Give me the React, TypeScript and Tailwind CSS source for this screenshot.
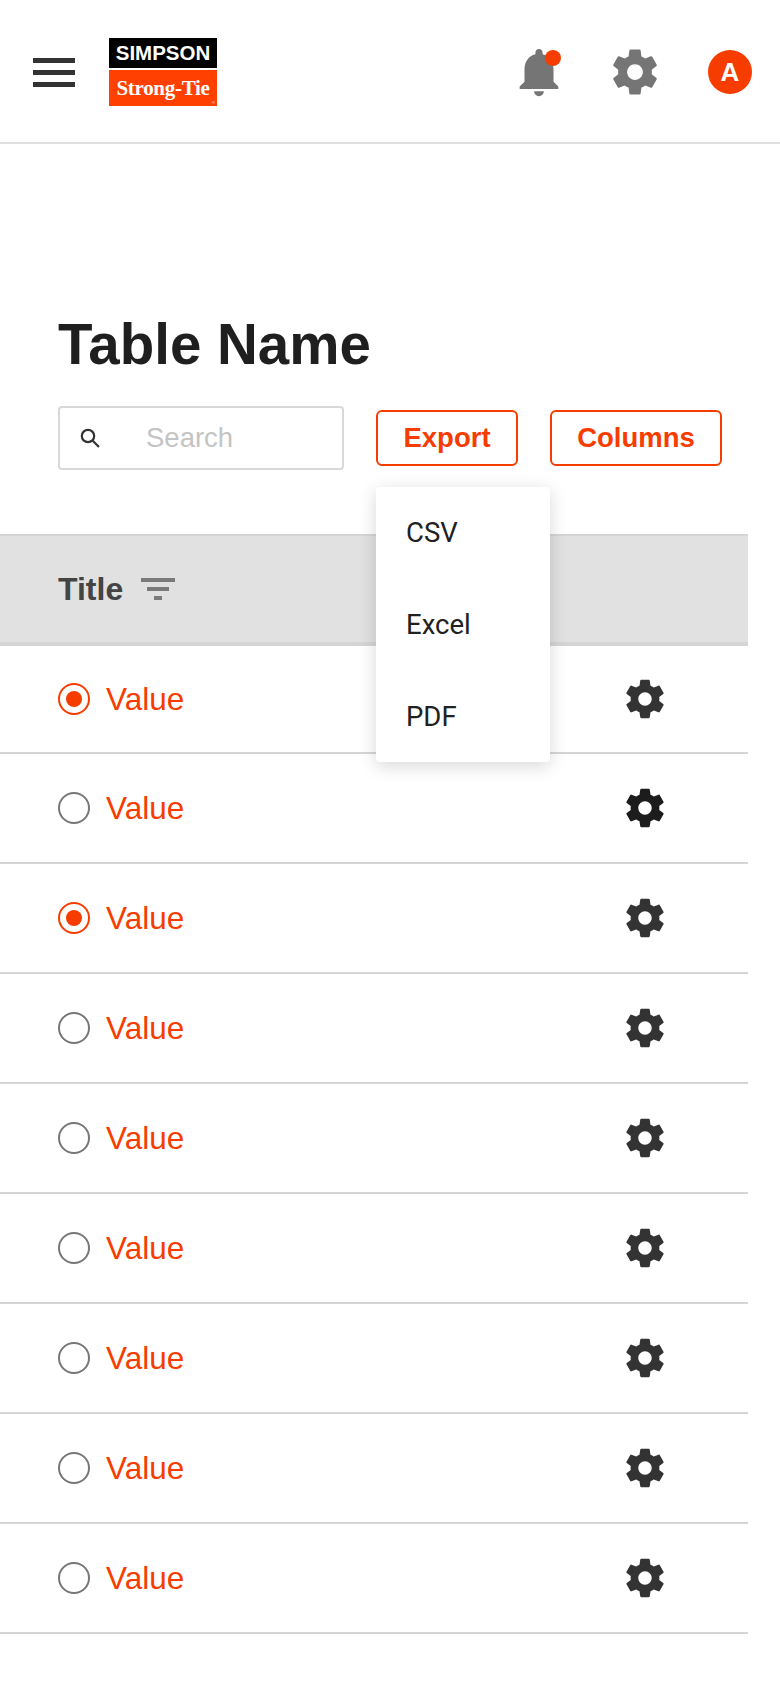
const GEAR =
  'M19.43 12.98c.04-.32.07-.64.07-.98s-.03-.66-.07-.98l2.11-1.65c.19-.15.24-.42.12-.64l-2-3.46c-.12-.22-.39-.3-.61-.22l-2.49 1c-.52-.4-1.08-.73-1.69-.98l-.38-2.65C14.46 2.18 14.25 2 14 2h-4c-.25 0-.46.18-.49.42l-.38 2.65c-.61.25-1.17.59-1.69.98l-2.49-1c-.23-.09-.49 0-.61.22l-2 3.46c-.13.22-.07.49.12.64l2.11 1.65c-.04.32-.07.65-.07.98s.03.66.07.98l-2.11 1.65c-.19.15-.24.42-.12.64l2 3.46c.12.22.39.3.61.22l2.49-1c.52.4 1.08.73 1.69.98l.38 2.65c.03.24.24.42.49.42h4c.25 0 .46-.18.49-.42l.38-2.65c.61-.25 1.17-.59 1.69-.98l2.49 1c.23.09.49 0 .61-.22l2-3.46c.12-.22.07-.49-.12-.64l-2.11-1.65zM12 15.5c-1.93 0-3.5-1.57-3.5-3.5s1.57-3.5 3.5-3.5 3.5 1.57 3.5 3.5-1.57 3.5-3.5 3.5z';

function Gear({ className }: { className: string }) {
  return (
    <svg viewBox="0 0 24 24" fill="currentColor" className={className}>
      <path d={GEAR} />
    </svg>
  );
}

function Logo() {
  return (
    <div className="ml-[34px] flex w-[108px] flex-col gap-[2px]">
      <div className="flex h-[30px] items-center justify-center bg-black font-['Liberation_Sans',sans-serif] text-[20.5px] leading-none font-bold text-white">
        SIMPSON
      </div>
      <div className="relative flex h-[36px] items-center justify-center bg-[#ff4000] font-['Liberation_Serif',serif] text-[21px] leading-none font-bold tracking-[-0.3px] text-white">
        Strong-Tie
        <span className="absolute right-[2px] bottom-[1px] text-[5px] leading-none font-normal">®</span>
      </div>
    </div>
  );
}

function Header() {
  return (
    <header className="flex h-[144px] items-center border-b-2 border-[#e0e0e0] pt-[2px] pr-[28px] pl-[33px]">
      <div className="flex w-[42px] flex-col gap-[7px]">
        <div className="h-[5px] bg-[#333]" />
        <div className="h-[5px] bg-[#333]" />
        <div className="h-[5px] bg-[#333]" />
      </div>

      <Logo />

      <div className="ml-auto flex items-center">
        <div className="relative h-[58px] w-[58px]">
          <svg viewBox="0 0 24 24" fill="#757575" className="h-[58px] w-[58px]">
            <path d="M12 22c1.1 0 2-.9 2-2h-4c0 1.1.89 2 2 2zm6-6v-5c0-3.07-1.64-5.64-4.5-6.32V4c0-.83-.67-1.5-1.5-1.5s-1.5.67-1.5 1.5v.68C7.63 5.36 6 7.92 6 11v5l-2 2v1h16v-1l-2-2z" />
          </svg>
          <span className="absolute top-[7px] left-[35px] h-[16px] w-[16px] rounded-full bg-[#f73c00]" />
        </div>
        <Gear className="ml-[40px] h-[54px] w-[54px] text-[#757575]" />
        <div className="ml-[46px] flex h-[44px] w-[44px] items-center justify-center rounded-full bg-[#f73c00] font-['Liberation_Sans',sans-serif] text-[26px] font-bold text-white">
          A
        </div>
      </div>
    </header>
  );
}

function Toolbar() {
  const buttonClass =
    "flex h-[56px] items-center justify-center rounded-[6px] border-2 border-[#f73c00] bg-white text-[27.5px] font-bold text-[#f73c00]";

  return (
    <div className="mt-[29px] flex items-center gap-[32px] pl-[58px]">
      <div className="flex h-[64px] w-[286px] items-center rounded-[4px] border-2 border-[#d8d8d8] pl-[18px]">
        <svg viewBox="0 0 24 24" fill="none" stroke="#333" strokeWidth="2.2" className="h-[24px] w-[24px] shrink-0">
          <circle cx="10" cy="10" r="6.2" />
          <path d="M14.5 14.5 21 21" />
        </svg>
        <input
          placeholder="Search"
          className="ml-[44px] w-[180px] bg-transparent text-[27.5px] outline-none placeholder:text-[#c4c4c4]"
        />
      </div>

      <div className="relative">
        <button className={`${buttonClass} w-[142px]`}>Export</button>
        <div className="absolute top-[77px] left-0 z-10 w-[174px] rounded-[4px] bg-white font-['Roboto',sans-serif] text-[27.5px] text-[#212121] shadow-[0_4px_18px_rgba(0,0,0,0.16)]">
          {['CSV', 'Excel', 'PDF'].map((item) => (
            <div key={item} className="flex h-[91.67px] items-center pl-[30px]">
              {item}
            </div>
          ))}
        </div>
      </div>

      <button className={`${buttonClass} w-[172px]`}>Columns</button>
    </div>
  );
}

function Row({ index }: { index: number }) {
  const selected = index === 0 || index === 2;

  return (
    <div
      className={`flex items-center justify-between border-b-2 border-[#d5d5d5] pr-[80px] pl-[58px] ${
        index === 0 ? 'h-[108px]' : 'h-[110px]'
      }`}
    >
      <div className="flex items-center gap-[16px]">
        {selected ? (
          <span className="flex h-[32px] w-[32px] items-center justify-center rounded-full border-2 border-[#f73c00]">
            <span className="h-[16px] w-[16px] rounded-full bg-[#f73c00]" />
          </span>
        ) : (
          <span className="h-[32px] w-[32px] rounded-full border-2 border-[#777]" />
        )}
        <span className="pt-[1px] text-[31.5px] text-[#f73c00]">Value</span>
      </div>
      <Gear className={`h-[46px] w-[46px] ${index === 1 ? 'text-[#1c1c1c]' : 'text-[#333]'}`} />
    </div>
  );
}

export default function App() {
  return (
    <div className="min-h-[1688px] w-[780px] bg-white font-['Liberation_Sans',sans-serif]">
      <Header />

      <main className="pt-[168px]">
        <h1 className="pt-[1px] pl-[58px] text-[56.5px] leading-[64px] font-bold text-[#1f1f1f]">Table Name</h1>

        <Toolbar />

        <div className="mt-[64px] w-[748px]">
          <div className="flex h-[112px] items-center gap-[18px] border-t-2 border-b-4 border-[#d5d5d5] bg-[#e1e1e1] pl-[58px]">
            <span className="text-[32px] font-bold text-[#444]">Title</span>
            <svg viewBox="0 0 34 22" fill="#7a7a7a" className="h-[22px] w-[34px]">
              <rect x="0" y="0" width="34" height="4" />
              <rect x="6" y="9" width="22" height="4" />
              <rect x="13" y="18" width="8" height="4" />
            </svg>
          </div>

          {Array.from({ length: 9 }).map((_, i) => (
            <Row key={i} index={i} />
          ))}
        </div>
      </main>
    </div>
  );
}
